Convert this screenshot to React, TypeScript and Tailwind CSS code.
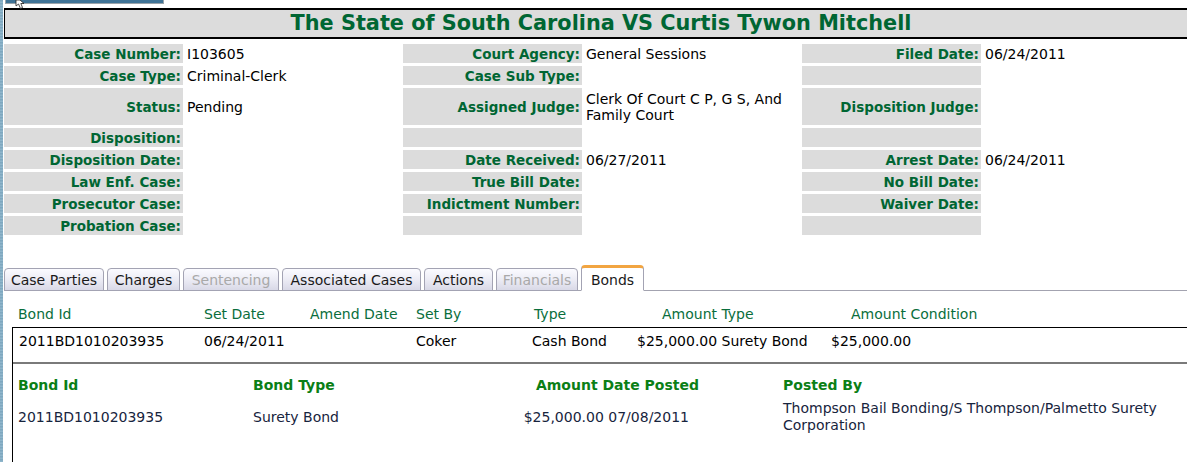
import React from "react";

const font = "font-['DejaVu_Sans','Verdana',sans-serif]";

type Cell = { label: string; value?: string; multi?: boolean };

const rows: Cell[][] = [
  [
    { label: "Case Number:", value: "I103605" },
    { label: "Court Agency:", value: "General Sessions" },
    { label: "Filed Date:", value: "06/24/2011" },
  ],
  [
    { label: "Case Type:", value: "Criminal-Clerk" },
    { label: "Case Sub Type:" },
    { label: "" },
  ],
  [
    { label: "Status:", value: "Pending" },
    { label: "Assigned Judge:", value: "Clerk Of Court C P, G S, And Family Court", multi: true },
    { label: "Disposition Judge:" },
  ],
  [{ label: "Disposition:" }, { label: "" }, { label: "" }],
  [
    { label: "Disposition Date:" },
    { label: "Date Received:", value: "06/27/2011" },
    { label: "Arrest Date:", value: "06/24/2011" },
  ],
  [{ label: "Law Enf. Case:" }, { label: "True Bill Date:" }, { label: "No Bill Date:" }],
  [{ label: "Prosecutor Case:" }, { label: "Indictment Number:" }, { label: "Waiver Date:" }],
  [{ label: "Probation Case:" }, { label: "" }, { label: "" }],
];

const tabs = [
  { name: "Case Parties", w: "w-[100px]", dis: false },
  { name: "Charges", w: "w-[73px]", dis: false },
  { name: "Sentencing", w: "w-[96px]", dis: true },
  { name: "Associated Cases", w: "w-[139px]", dis: false },
  { name: "Actions", w: "w-[69px]", dis: false },
  { name: "Financials", w: "w-[82px]", dis: true },
];

export default function App() {
  return (
    <div className={`relative w-[1187px] h-[462px] overflow-hidden bg-white flex ${font}`}>
      {/* left textured strip */}
      <div className="w-[3px] h-full shrink-0 bg-[repeating-linear-gradient(0deg,#7fa9c2_0px,#9fc2d4_1px,#6e9ab5_2px,#8fb6ca_3px)]" />
      <div className="flex-1 flex flex-col pl-px min-w-0">
        {/* top clipped bar */}
        <div className="h-[4px] flex">
          <div className="ml-[1px] w-[159px] h-[4px] bg-[#3f7396] border-x border-b border-[#9aa4ab]" />
        </div>
        {/* title */}
        <div className="mt-[4px] h-[31px] bg-[#dcdcdc] border-t-2 border-b-2 border-l border-black flex items-center justify-center pl-[10px]">
          <span className="text-[20.8px] font-bold text-[#006633] leading-none">
            The State of South Carolina VS Curtis Tywon Mitchell
          </span>
        </div>
        {/* fields */}
        <div className="mt-[5px] grid grid-cols-[179px_218px_179px_218px_179px_1fr] gap-x-px gap-y-[3px] leading-[16px]">
          {rows.map((r, i) =>
            r.map((c, j) => (
              <React.Fragment key={`${i}-${j}`}>
                <div className="bg-[#dcdcdc] min-h-[19px] flex items-center justify-end pr-[2px] pt-[1px] text-[13.5px] font-bold text-[#006633] whitespace-nowrap">
                  {c.label}
                </div>
                <div
                  className={`min-h-[19px] flex items-center pl-[3px] text-[14px] text-black ${
                    c.multi ? "py-[2.5px] pr-[4px]" : "pt-[1px] whitespace-nowrap"
                  }`}
                >
                  {c.value ?? ""}
                </div>
              </React.Fragment>
            ))
          )}
        </div>
        {/* tabs */}
        <div className="mt-[30px] h-[26px] flex items-end gap-[3px] border-b border-[#a3a3b0] text-[14px]">
          {tabs.map((t) => (
            <div
              key={t.name}
              className={`${t.w} h-[23px] shrink-0 -mb-px rounded-t-[4px] border border-[#a3a3b3] bg-gradient-to-b from-[#fbfbff] via-[#ececf5] to-[#d9d9e7] flex items-center justify-center pt-[1px] whitespace-nowrap ${
                t.dis ? "text-[#a9a9a9]" : "text-[#1a1a1a]"
              }`}
            >
              {t.name}
            </div>
          ))}
          <div className="w-[63px] h-[26px] shrink-0 -mb-px rounded-t-[4px] border border-[#a3a3b3] border-b-white border-t-[3px] border-t-[#f2a541] bg-white flex items-center justify-center pt-[2px] text-[#1a1a1a]">
            Bonds
          </div>
        </div>
        {/* bonds panel */}
        <div className="flex-1 pl-[8px] flex flex-col text-[14px] leading-[17px]">
          <div className="h-[36px] shrink-0 flex items-end pb-[4px] text-[#0a6e3c] pl-[6px] whitespace-nowrap">
            <div className="w-[186px] shrink-0">Bond Id</div>
            <div className="w-[106px] shrink-0">Set Date</div>
            <div className="w-[106px] shrink-0">Amend Date</div>
            <div className="w-[118px] shrink-0">Set By</div>
            <div className="w-[128px] shrink-0">Type</div>
            <div className="w-[189px] shrink-0">Amount Type</div>
            <div className="shrink-0">Amount Condition</div>
          </div>
          <div className="border-l border-black flex-1">
            <div className="border-t border-black border-b-2 border-b-[#7a7a7a] h-[37px] flex items-start pt-[5px] pl-[6px] text-black whitespace-nowrap">
              <div className="w-[185px] shrink-0">2011BD1010203935</div>
              <div className="w-[212px] shrink-0">06/24/2011</div>
              <div className="w-[116px] shrink-0">Coker</div>
              <div className="w-[105px] shrink-0">Cash Bond</div>
              <div className="w-[194px] shrink-0">$25,000.00 Surety Bond</div>
              <div className="shrink-0">$25,000.00</div>
            </div>
            <div className="pl-[5px] pt-[13px] flex items-center font-bold text-[#0b7f16] whitespace-nowrap">
              <div className="w-[235px] shrink-0">Bond Id</div>
              <div className="w-[446px] shrink-0 flex">
                <span className="w-[200px] shrink-0">Bond Type</span>
                <span className="w-[246px] shrink-0 text-right">Amount Date Posted</span>
              </div>
              <div className="pl-[84px] shrink-0">Posted By</div>
            </div>
            <div className="pl-[5px] pt-[6px] flex items-center text-[#17243d] whitespace-nowrap">
              <div className="w-[235px] shrink-0">2011BD1010203935</div>
              <div className="w-[446px] shrink-0 flex">
                <span className="w-[200px] shrink-0">Surety Bond</span>
                <span className="w-[246px] shrink-0 text-right pr-[10px]">$25,000.00 07/08/2011</span>
              </div>
              <div className="pl-[84px] shrink-0 w-[484px] whitespace-normal">
                Thompson Bail Bonding/S Thompson/Palmetto Surety Corporation
              </div>
            </div>
          </div>
        </div>
      </div>
      {/* mouse cursor tip peeking in at top */}
      <svg className="absolute left-[15px] top-0" width="12" height="9" viewBox="0 0 12 9">
        <path d="M1 0 L1 6 L3.5 4 L5.5 8.5 L7.5 7.5 L5.8 3.5 L9 3.5 L5 0 Z" fill="#fff" stroke="#222" strokeWidth="0.8" />
      </svg>
    </div>
  );
}
